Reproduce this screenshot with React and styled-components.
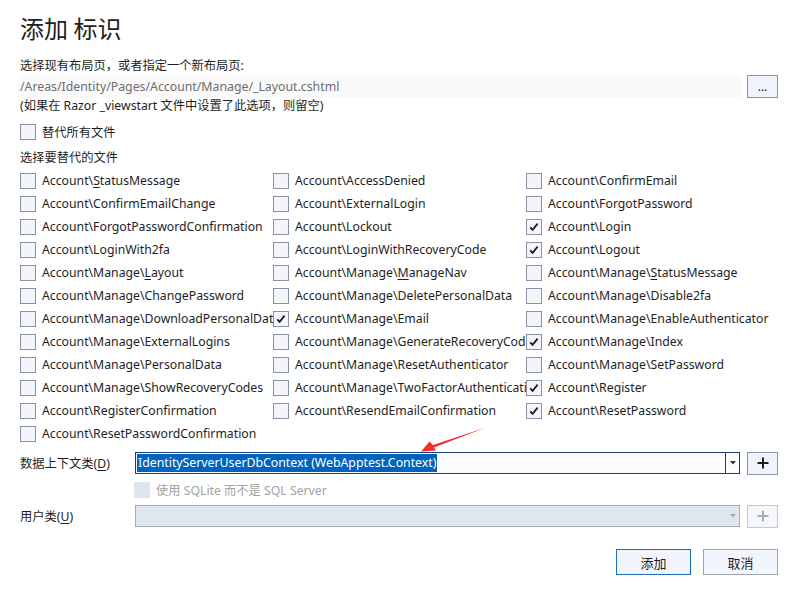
import React from 'react';
import styled, { createGlobalStyle } from 'styled-components';

const GlobalStyle = createGlobalStyle`
	html, body {
		margin: 0;
		padding: 0;
		background: #ffffff;
	}
	body {
		font-family: "Noto Sans", "Noto Sans CJK SC", sans-serif;
		font-size: 12.25px;
		color: #1e1e1e;
	}
`;

const files = [
	['Account\\', 'S', 'tatusMessage'],
	['Account\\AccessDenied'],
	['Account\\ConfirmEmail'],
	['Account\\ConfirmEmailChange'],
	['Account\\ExternalLogin'],
	['Account\\ForgotPassword'],
	['Account\\ForgotPasswordConfirmation'],
	['Account\\Lockout'],
	['Account\\Login', null, null, true],
	['Account\\LoginWith2fa'],
	['Account\\LoginWithRecoveryCode'],
	['Account\\Logout', null, null, true],
	['Account\\Manage\\', 'L', 'ayout'],
	['Account\\Manage\\', 'M', 'anageNav'],
	['Account\\Manage\\', 'S', 'tatusMessage'],
	['Account\\Manage\\ChangePassword'],
	['Account\\Manage\\DeletePersonalData'],
	['Account\\Manage\\Disable2fa'],
	['Account\\Manage\\DownloadPersonalData'],
	['Account\\Manage\\Email', null, null, true],
	['Account\\Manage\\EnableAuthenticator'],
	['Account\\Manage\\ExternalLogins'],
	['Account\\Manage\\GenerateRecoveryCodes'],
	['Account\\Manage\\Index', null, null, true],
	['Account\\Manage\\PersonalData'],
	['Account\\Manage\\ResetAuthenticator'],
	['Account\\Manage\\SetPassword'],
	['Account\\Manage\\ShowRecoveryCodes'],
	['Account\\Manage\\TwoFactorAuthentication'],
	['Account\\Register', null, null, true],
	['Account\\RegisterConfirmation'],
	['Account\\ResendEmailConfirmation'],
	['Account\\ResetPassword', null, null, true],
	['Account\\ResetPasswordConfirmation']
];

const Page = styled.div`
	position: relative;
	width: 789px;
	height: 592px;
	padding: 0 11px 0 20px;
	box-sizing: border-box;
	overflow: hidden;
`;

const Title = styled.h1`
	margin: 13px 0 0;
	font-family: "Noto Sans CJK SC", sans-serif;
	font-size: 24px;
	font-weight: 400;
	line-height: 30px;
	color: #1e1e1e;
`;

const Text = styled.div`
	margin-top: ${(p) => p.$top || 0}px;
	line-height: 16px;
	height: 16px;
	white-space: nowrap;
`;

const PathRow = styled.div`
	display: flex;
	gap: 5px;
	margin-top: 1px;
	margin-left: -2px;
`;

const PathField = styled.div`
	flex: 1;
	height: 23px;
	line-height: 23px;
	padding-left: 2px;
	background: #fafafa;
	color: #6d6d6d;
	font-size: 12.3px;
`;

const SmallButton = styled.div`
	width: 31px;
	height: 23px;
	box-sizing: border-box;
	border: 1px solid ${(p) => (p.$disabled ? '#c3c7cf' : '#8b92a5')};
	background: ${(p) => (p.$disabled ? '#f6f7fa' : '#eff3fc')};
	display: flex;
	align-items: center;
	justify-content: center;
	font-size: 12px;
	line-height: 1;
	color: #1e1e1e;
	padding-top: ${(p) => (p.$dots ? 1 : 0)}px;
`;

const CheckRow = styled.label`
	display: flex;
	align-items: center;
	gap: 6px;
	height: ${(p) => p.$h || 16}px;
	margin-top: ${(p) => p.$top || 0}px;
	margin-left: ${(p) => p.$left || 0}px;
	overflow: hidden;
	white-space: nowrap;
	color: ${(p) => (p.$disabled ? '#a3a3a3' : '#1e1e1e')};
`;

const Box = styled.span`
	flex: none;
	width: 16px;
	height: 16px;
	box-sizing: border-box;
	border: ${(p) => (p.$disabled ? 'none' : '1px solid #8a91a6')};
	background: ${(p) => (p.$disabled ? '#dfe5ef' : '#f3f5fb')};
	display: flex;
	align-items: center;
	justify-content: center;
`;

const FileGrid = styled.div`
	display: grid;
	grid-template-columns: repeat(3, 253px);
	grid-auto-rows: 23px;
	margin-top: 3px;
`;

const Key = styled.span`
	text-decoration: underline;
	text-underline-offset: 2px;
`;

const FormRow = styled.div`
	display: flex;
	align-items: center;
	gap: 7px;
	margin-top: ${(p) => p.$top || 0}px;
	height: 22px;
`;

const FormLabel = styled.div`
	width: 108px;
	white-space: nowrap;
`;

const Combo = styled.div`
	flex: 1;
	height: 22px;
	box-sizing: border-box;
	border: 1px solid ${(p) => (p.$disabled ? '#a8acb5' : '#1d3b7a')};
	background: ${(p) => (p.$disabled ? '#dfe6f0' : '#fbfcfe')};
	display: flex;
	align-items: stretch;
`;

const ComboValue = styled.div`
	flex: 1;
	padding: 1px;
	display: flex;
	align-items: stretch;
	font-size: 12.3px;
`;

const Selected = styled.span`
	background: #0064be;
	color: #ffffff;
	line-height: 18px;
	padding: 0 1px;
	white-space: nowrap;
`;

const Arrow = styled.div`
	width: 13px;
	border-left: 1px solid ${(p) => (p.$disabled ? 'transparent' : '#1d3b7a')};
	display: flex;
	align-items: center;
	justify-content: center;
`;

const Footer = styled.div`
	display: flex;
	justify-content: flex-end;
	gap: 12px;
	margin-top: 22px;
`;

const Button = styled.div`
	width: 75px;
	height: 26px;
	box-sizing: border-box;
	border: 1px solid ${(p) => (p.$primary ? '#1b6fc2' : '#9fa3ab')};
	background: #f2f5fc;
	display: flex;
	align-items: center;
	justify-content: center;
	font-family: "Noto Sans CJK SC", sans-serif;
	font-size: 13px;
`;

const Overlay = styled.svg`
	position: absolute;
	left: 0;
	top: 0;
	pointer-events: none;
`;

const Check = () => (
	<svg width="12" height="12" viewBox="0 0 12 12">
		<path d="M2.2 6.4 L4.6 8.9 L9.6 2.6" fill="none" stroke="#1a1a1a" strokeWidth="1.7" />
	</svg>
);

const Plus = ({ color }) => (
	<svg width="12" height="12" viewBox="0 0 12 12">
		<path d="M6 0.5 V11.5 M0.5 6 H11.5" stroke={color} strokeWidth="2" />
	</svg>
);

const Caret = ({ color }) => (
	<svg width="6" height="4" viewBox="0 0 6 4">
		<path d="M0 0 H6 L3 3.5 Z" fill={color} />
	</svg>
);

const App = () => (
	<Page>
		<GlobalStyle />
		<Title>添加 标识</Title>
		<Text $top={15}>选择现有布局页，或者指定一个新布局页:</Text>
		<PathRow>
			<PathField>/Areas/Identity/Pages/Account/Manage/_Layout.cshtml</PathField>
			<SmallButton $dots>...</SmallButton>
		</PathRow>
		<Text>(如果在 Razor _viewstart 文件中设置了此选项，则留空)</Text>
		<CheckRow $top={10}>
			<Box />
			替代所有文件
		</CheckRow>
		<Text $top={10}>选择要替代的文件</Text>
		<FileGrid>
			{files.map(([pre, key, post, checked]) => (
				<CheckRow key={pre + (key || '') + (post || '')} $h={23}>
					<Box>{checked && <Check />}</Box>
					<span>
						{pre}
						{key && <Key>{key}</Key>}
						{post}
					</span>
				</CheckRow>
			))}
		</FileGrid>
		<FormRow $top={7}>
			<FormLabel>
				数据上下文类(<Key>D</Key>)
			</FormLabel>
			<Combo>
				<ComboValue>
					<Selected>IdentityServerUserDbContext (WebApptest.Context)</Selected>
				</ComboValue>
				<Arrow>
					<Caret color="#333" />
				</Arrow>
			</Combo>
			<SmallButton>
				<Plus color="#1e1e1e" />
			</SmallButton>
		</FormRow>
		<CheckRow $top={8} $left={114} $disabled>
			<Box $disabled />
			使用 SQLite 而不是 SQL Server
		</CheckRow>
		<FormRow $top={7}>
			<FormLabel>
				用户类(<Key>U</Key>)
			</FormLabel>
			<Combo $disabled>
				<ComboValue />
				<Arrow $disabled>
					<Caret color="#a6aab2" />
				</Arrow>
			</Combo>
			<SmallButton $disabled>
				<Plus color="#a9adb5" />
			</SmallButton>
		</FormRow>
		<Footer>
			<Button $primary>添加</Button>
			<Button>取消</Button>
		</Footer>
		<Overlay width="789" height="592" viewBox="0 0 789 592">
			<polygon
				points="486,427.5 433,445 429.5,441.5 421,451.5 436,450.5 434,447.6"
				fill="#f0302a"
			/>
		</Overlay>
	</Page>
);

export default App;
